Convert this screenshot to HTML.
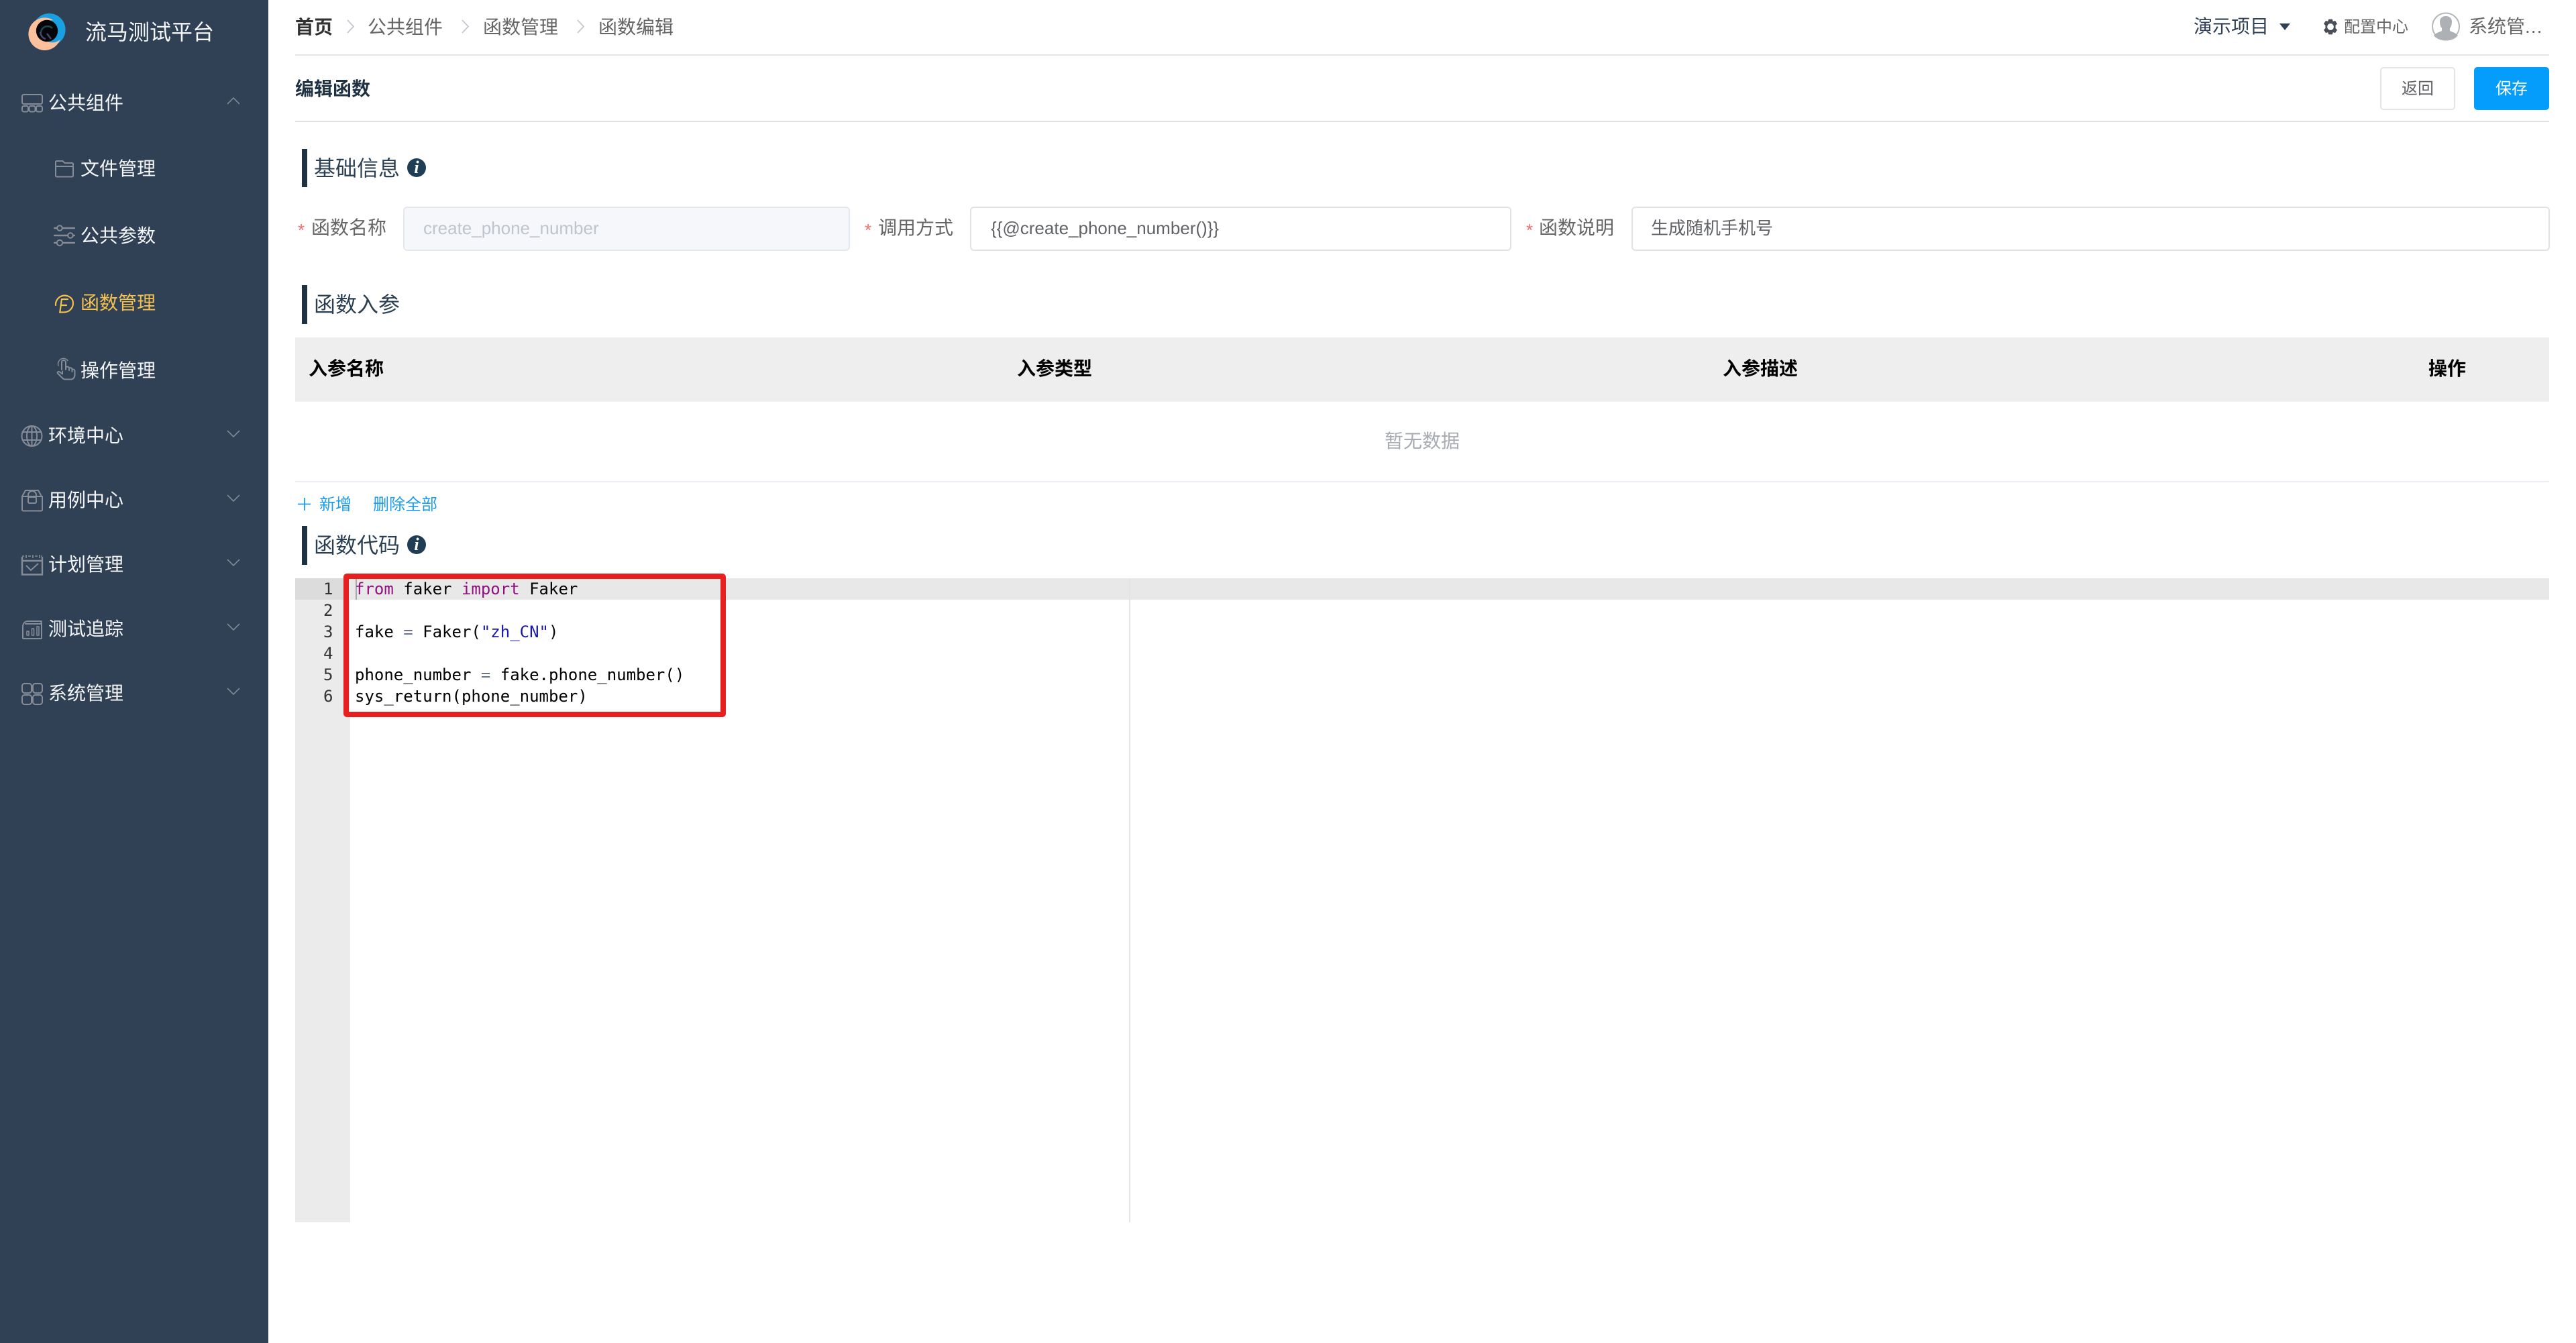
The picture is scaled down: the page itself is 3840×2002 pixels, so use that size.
<!DOCTYPE html>
<html lang="zh-CN">
<head>
<meta charset="utf-8">
<title>流马测试平台</title>
<style>
html,body{margin:0;padding:0;width:3840px;height:2002px;overflow:hidden;background:#fff;}
body{position:relative;font-family:"Liberation Sans","Noto Sans CJK SC",sans-serif;color:#666;}
.a{position:absolute;box-sizing:border-box;}
.t{position:absolute;white-space:nowrap;line-height:40px;height:40px;}
.m{font-size:28px;color:#f4f5f7;}
.c{font-family:"DejaVu Sans Mono","Liberation Mono",monospace;font-size:24px;line-height:32px;height:32px;color:#000;white-space:pre;position:absolute;left:529px;}
.k{color:#930f80}.s{color:#1a1aa6}.o{color:#687687}
.g{font-family:"DejaVu Sans Mono","Liberation Mono",monospace;font-size:24px;line-height:32px;height:32px;color:#333;position:absolute;left:482px;}
.b{position:absolute;left:450px;width:8px;background:#1f3244;}
.h{font-size:32px;color:#2b3f52;}
.l{font-size:28px;color:#666;}
.r{font-size:26px;color:#f56c6c;line-height:40px;}
.i{position:absolute;width:28px;height:28px;border-radius:50%;background:#1f3d55;color:#fff;font:italic bold 26px/28px "Liberation Serif",serif;text-align:center;}
.in{position:absolute;top:308px;height:62px;border:2px solid #e0e2e6;border-radius:6px;background:#fff;}
.th{font-size:28px;font-weight:700;color:#000;}
svg{position:absolute;left:0;top:0;overflow:visible;}
</style>
</head>
<body>
<div class="a" style="left:0;top:0;width:400px;height:2002px;background:#304156"></div>

<!-- sidebar icons, logo, chevrons -->
<svg width="3840" height="2002" viewBox="0 0 3840 2002" fill="none">
  <!-- logo -->
  <circle cx="73.3" cy="44.3" r="24.3" fill="#1aa0e0"/>
  <circle cx="66.7" cy="50.7" r="24.3" fill="#fcc09c"/>
  <circle cx="78.3" cy="46.7" r="16.7" fill="#1aa0e0"/>
  <circle cx="70" cy="46" r="16.2" fill="#05060a"/>
  <path d="M61 50a10 10 0 0 1 17-8" stroke="#1f4650" stroke-width="2.500"/>
  <path d="M60 48c1 6 4 9 8 10" stroke="#4d4270" stroke-width="2.500"/>
  <path d="M70 50l6 8" stroke="#4d4270" stroke-width="2.500"/>

  <g stroke="#858c98" stroke-width="2" stroke-linecap="round" stroke-linejoin="round">
    <!-- 公共组件 -->
    <rect x="33" y="141" width="30" height="14" rx="2.5"/>
    <rect x="33" y="158" width="9" height="8.5" rx="2.5"/><rect x="43.5" y="158" width="9" height="8.5" rx="2.5"/><rect x="54" y="158" width="9" height="8.5" rx="2.5"/>
    <!-- 文件管理 -->
    <path d="M83 246v16a1.5 1.5 0 0 0 1.5 1.5h23a1.5 1.5 0 0 0 1.500-1.500v-17.500a1.500 1.500 0 0 0-1.500-1.500h-11l-3-3h-9a1.500 1.500 0 0 0-1.500 1.500zM83 248h26"/>
    <!-- 公共参数 -->
    <path d="M81 340h3M94 340h17M81 351h19M110 351h1M81 362h3M94 362h17" stroke-width="2.400"/>
    <circle cx="89" cy="340" r="3.800"/><circle cx="105" cy="351" r="3.800"/><circle cx="89" cy="362" r="4.200"/>
    <!-- 操作管理 -->
    <path d="M92 551v-11a3 3 0 0 1 6 0v11M98 548a3 3 0 0 1 5 0v4M103 549a2.800 2.800 0 0 1 4.500 1v4M107.500 551c1-.8 4-.5 4 2v6c0 3.500-2.500 6.500-6 6.500h-8.500c-2 0-3-1-4-2l-7-7c-1-1.500 1-3.500 3-2l4 3v-4"/>
    <path d="M87 545a7.500 7.500 0 0 1 1-7 8 8 0 0 1 13-.5" stroke-width="1.500"/>
    <!-- 环境中心 -->
    <circle cx="47.500" cy="650" r="15"/><ellipse cx="47.500" cy="650" rx="7.500" ry="15"/><path d="M47.500 635v30M33.500 644h28M33.500 656h28"/>
    <!-- 用例中心 -->
    <path d="M33 740l5-9h19l5 9M33 740v20a1.500 1.500 0 0 0 1.500 1.500h27a1.500 1.500 0 0 0 1.500-1.500v-20zM33 740h30"/>
    <path d="M42 740v-2a6 6 0 0 1 12 0v2" /><rect x="42" y="741" width="12" height="9" rx="1.500"/>
    <!-- 测试追踪 -->
    <path d="M34 935c0-6 3-9 8-9h20M34 935v16a1 1 0 0 0 1 1h26a1 1 0 0 0 1-1v-21c0-2-1-4-3-4M38 930h24"/>
    <path d="M40 947v-6h3v6zM47.500 947v-10h3v10zM55 947v-13h3v13z" stroke-width="1.500"/>
    <!-- 系统管理 -->
    <rect x="33" y="1019" width="14" height="14" rx="3.500"/><rect x="49" y="1019" width="14" height="14" rx="3.500"/>
    <rect x="33" y="1036" width="14" height="14" rx="3.500"/><rect x="49" y="1036" width="14" height="14" rx="3.500"/>
  </g>
  <!-- 计划管理 -->
  <g stroke="#858c98" stroke-width="2.400">
    <path d="M33 830v26.500h30V830M33 836h30" fill="none"/>
    <path d="M33 829h3M39 827v5M42 829h4M49 827v5M52 829h4M59 827v5M61 829h2" stroke-width="1.600"/>
    <path d="M39 843l7 7 11-10" stroke-width="2"/>
  </g>
  <!-- 函数管理 active -->
  <g stroke="#f4c04e" stroke-width="2.200" stroke-linecap="round" stroke-linejoin="round">
    <path d="M83 455a13.500 13.500 0 0 1 25-8 13.500 13.500 0 0 1-13 18.500h-6"/>
    <path d="M101 446h-9l-2.500 18M91 455h8"/>
  </g>
  <!-- menu chevrons -->
  <g stroke="#7f8793" stroke-width="1.600">
    <path d="M339 155l9-9 9 9"/>
    <path d="M339 642l9 9 9-9M339 738l9 9 9-9M339 834l9 9 9-9M339 930l9 9 9-9M339 1026l9 9 9-9"/>
  </g>
  <!-- breadcrumb chevrons -->
  <g stroke="#c4c7cc" stroke-width="1.800">
    <path d="M518 30l9 9.500-9 9.500M689 30l9 9.500-9 9.500M861 30l9 9.500-9 9.500"/>
  </g>
  <!-- top right -->
  <path d="M3398 35h16l-8 10z" fill="#304156"/>
  <g fill="#4a4f57" transform="translate(3474 40) scale(1.080) translate(-3473.500 -40)">
    <path fill-rule="evenodd" d="M3471 29.500h5l1 3 3-1 2.800 4.300-2.300 2.200v4l2.300 2.200-2.800 4.300-3-1-1 3h-5l-1-3-3 1-2.800-4.300 2.300-2.200v-4l-2.300-2.200 2.800-4.300 3 1zM3473.500 35.500a4.500 4.500 0 1 0 .01 0z"/>
  </g>
  <circle cx="3646" cy="39.500" r="20" fill="#fff" stroke="#b4b6ba" stroke-width="2"/>
  <path d="M3628 53c4-5 9-5 12-7v-4c-2-2-3-6-3-10 0-5 4-8 9-8s9 3 9 8c0 4-1 8-3 10v4c3 2 8 2 12 7-4 5-11 7.500-18 7.500s-14-2.500-18-7.500z" fill="#adb0b5"/>
  <!-- plus -->
  <path d="M454 742v19M444 751.500h19" stroke="#1a9cf0" stroke-width="1.800"/>
</svg>

<!-- sidebar text -->
<div class="t" style="left:127px;top:28px;font-size:32px;color:#f4f5f7">流马测试平台</div>
<div class="t m" style="left:72px;top:134px">公共组件</div>
<div class="t m" style="left:120px;top:232px">文件管理</div>
<div class="t m" style="left:120px;top:332px">公共参数</div>
<div class="t m" style="left:120px;top:432px;color:#f4c04e">函数管理</div>
<div class="t m" style="left:120px;top:533px">操作管理</div>
<div class="t m" style="left:72px;top:630px">环境中心</div>
<div class="t m" style="left:72px;top:726px">用例中心</div>
<div class="t m" style="left:72px;top:822px">计划管理</div>
<div class="t m" style="left:72px;top:918px">测试追踪</div>
<div class="t m" style="left:72px;top:1014px">系统管理</div>

<!-- breadcrumb -->
<div class="t" style="left:440px;top:21px;font-size:28px;font-weight:700;color:#333">首页</div>
<div class="t" style="left:548px;top:21px;font-size:28px;color:#666">公共组件</div>
<div class="t" style="left:720px;top:21px;font-size:28px;color:#666">函数管理</div>
<div class="t" style="left:892px;top:21px;font-size:28px;color:#666">函数编辑</div>
<div class="t" style="left:3270px;top:20px;font-size:28px;color:#304156">演示项目</div>
<div class="t" style="left:3494px;top:21px;font-size:24px;color:#666">配置中心</div>
<div class="t" style="left:3680px;top:20px;font-size:28px;color:#666">系统管<span style="letter-spacing:1px">...</span></div>

<div class="a" style="left:440px;top:81px;width:3360px;height:2px;background:#e6e6e6"></div>
<div class="t" style="left:440px;top:113px;font-size:28px;font-weight:700;color:#1f3244">编辑函数</div>
<div class="a" style="left:3548px;top:100px;width:112px;height:64px;border:2px solid #e2e4e8;border-radius:5px;background:#fff;text-align:center;font-size:24px;line-height:62px;color:#606266">返回</div>
<div class="a" style="left:3688px;top:100px;width:112px;height:64px;border-radius:5px;background:#059dfb;text-align:center;font-size:24px;line-height:66px;color:#fff">保存</div>
<div class="a" style="left:440px;top:180px;width:3360px;height:2px;background:#e2e2e2"></div>

<!-- section 1 -->
<div class="b" style="top:222px;height:57px"></div>
<div class="t h" style="left:468px;top:231px">基础信息</div>
<div class="i" style="left:607px;top:236px">i</div>

<div class="t r" style="left:444px;top:323px">*</div>
<div class="t l" style="left:464px;top:320px">函数名称</div>
<div class="in" style="left:601px;width:662px;background:#f5f7fa;border-color:#e4e7ed"></div>
<div class="t" style="left:631px;top:320px;font-size:26px;color:#c0c4cc">create_phone_number</div>

<div class="t r" style="left:1289px;top:323px">*</div>
<div class="t l" style="left:1309px;top:320px">调用方式</div>
<div class="in" style="left:1446px;width:803px"></div>
<div class="t" style="left:1477px;top:320px;font-size:26px;color:#606266">{{@create_phone_number()}}</div>

<div class="t r" style="left:2275px;top:323px">*</div>
<div class="t l" style="left:2294px;top:320px">函数说明</div>
<div class="in" style="left:2432px;width:1365px"></div>
<div class="t" style="left:2461px;top:320px;font-size:26px;color:#606266">生成随机手机号</div>

<!-- section 2 -->
<div class="b" style="top:425px;height:58px"></div>
<div class="t h" style="left:468px;top:434px">函数入参</div>
<div class="a" style="left:440px;top:503px;width:3360px;height:96px;background:#eee"></div>
<div class="t th" style="left:460px;top:530px">入参名称</div>
<div class="t th" style="left:1516px;top:530px">入参类型</div>
<div class="t th" style="left:2568px;top:530px">入参描述</div>
<div class="t th" style="left:3620px;top:530px">操作</div>
<div class="t" style="left:2064px;top:638px;font-size:28px;color:#a8abb2">暂无数据</div>
<div class="a" style="left:440px;top:717px;width:3360px;height:2px;background:#ebeef5"></div>
<div class="t" style="left:476px;top:733px;font-size:24px;color:#1a9cf0">新增</div>
<div class="t" style="left:556px;top:733px;font-size:24px;color:#1a9cf0">删除全部</div>

<!-- section 3 -->
<div class="b" style="top:784px;height:58px"></div>
<div class="t h" style="left:468px;top:793px">函数代码</div>
<div class="i" style="left:607px;top:798px">i</div>

<!-- editor -->
<div class="a" style="left:440px;top:862px;width:82px;height:960px;background:#ebebeb"></div>
<div class="a" style="left:440px;top:862px;width:72px;height:32px;background:#dcdcdc"></div>
<div class="a" style="left:522px;top:862px;width:3278px;height:32px;background:#e8e8e8"></div>
<div class="a" style="left:1683px;top:862px;width:1.500px;height:960px;background:#e4e4e4"></div>
<div class="a" style="left:530px;top:862px;width:2px;height:32px;background:#a8a8a8"></div>
<div class="g" style="top:862px">1</div>
<div class="g" style="top:894px">2</div>
<div class="g" style="top:926px">3</div>
<div class="g" style="top:958px">4</div>
<div class="g" style="top:990px">5</div>
<div class="g" style="top:1022px">6</div>
<div class="c" style="top:862px"><span class="k">from</span> faker <span class="k">import</span> Faker</div>
<div class="c" style="top:926px">fake <span class="o">=</span> Faker(<span class="s">"zh_CN"</span>)</div>
<div class="c" style="top:990px">phone_number <span class="o">=</span> fake.phone_number()</div>
<div class="c" style="top:1022px">sys_return(phone_number)</div>

<!-- highlight -->
<div class="a" style="left:512px;top:855px;width:570px;height:214px;border:8px solid #e7201f;border-radius:5px"></div>
</body>
</html>
